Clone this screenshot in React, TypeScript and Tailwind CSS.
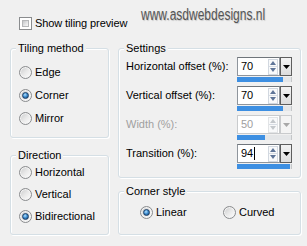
import React from "react";

function Radio({ checked }: { checked?: boolean }) {
  return (
    <span className="w-[13px] h-[13px] shrink-0 rounded-full border border-[#8a8c8e] bg-[linear-gradient(135deg,#c9cacb_0%,#e9e9e9_50%,#ffffff_100%)] flex items-center justify-center shadow-[inset_0_0_0_1px_#f4f4f4]">
      {checked && (
        <span className="w-[7px] h-[7px] rounded-full border border-[#1c3f66] bg-[radial-gradient(circle_at_40%_35%,#b5e2ff_0%,#3f8fd2_45%,#0f3c6e_100%)]" />
      )}
    </span>
  );
}

function Checkbox() {
  return (
    <span className="w-[13px] h-[13px] shrink-0 border border-[#8a8c8e] bg-white p-[2px] flex">
      <span className="flex-1 bg-[linear-gradient(135deg,#c4c6c8_0%,#e6e7e8_60%,#f7f7f7_100%)] border border-[#b5b7b9]" />
    </span>
  );
}

function RadioRow({ label, checked, h }: { label: string; checked?: boolean; h: string }) {
  return (
    <div className={`flex items-center gap-[3px] ${h}`}>
      <Radio checked={checked} />
      <span className="whitespace-nowrap">{label}</span>
    </div>
  );
}

function Spin({
  value,
  fill,
  disabled,
  caret,
}: {
  value: string;
  fill: number;
  disabled?: boolean;
  caret?: boolean;
}) {
  const arrow = disabled ? "#c4c8cc" : "#5f7598";
  return (
    <div className="flex flex-col w-[55px]">
      <div className="flex h-[19px]">
        <div
          className={`flex-1 flex items-center bg-white border ${
            disabled ? "border-[#c9cbcd] text-[#a0a0a0]" : "border-[#8f959c] border-t-[#6f757b]"
          } pl-[3px] pr-[1px]`}
        >
          <span className="flex-1 flex items-center leading-[13px]">
            {value}
            {caret && <span className="w-[1px] h-[13px] bg-black ml-[1px]" />}
          </span>
          <div className={`w-[10px] h-[16px] flex flex-col border ${disabled ? "border-[#e2e4e6]" : "border-[#d2d8e0]"} bg-[#f8f9fa]`}>
            <div className="flex-1 flex items-center justify-center border-b border-[#d8dde4]">
              <svg width="6" height="4" viewBox="0 0 6 4">
                <path d="M0 4 L3 0 L6 4 Z" fill={arrow} />
              </svg>
            </div>
            <div className="flex-1 flex items-center justify-center">
              <svg width="6" height="4" viewBox="0 0 6 4">
                <path d="M0 0 L6 0 L3 4 Z" fill={arrow} />
              </svg>
            </div>
          </div>
        </div>
        <div
          className={`w-[12px] flex items-center justify-center border ${
            disabled ? "border-[#c9cbcd] bg-[#f4f4f4]" : "border-[#5e5e5e] bg-[linear-gradient(180deg,#f4f4f4,#dcdcdc)]"
          }`}
        >
          <svg width="7" height="4" viewBox="0 0 7 4">
            <path d="M0 0 L7 0 L3.5 4 Z" fill={disabled ? "#a8a8a8" : "#000"} />
          </svg>
        </div>
      </div>
      <div className="h-[5px] mt-[1px] bg-[#e4e6e8] border-r border-[#c4c6c8] flex">
        <div className="h-full bg-[#3d8fe2]" style={{ width: fill }} />
      </div>
    </div>
  );
}

function SettingRow({
  label,
  value,
  fill,
  disabled,
  caret,
}: {
  label: string;
  value: string;
  fill: number;
  disabled?: boolean;
  caret?: boolean;
}) {
  return (
    <div className="flex h-[29px]">
      <span className={`w-[111px] h-[19px] leading-[19px] whitespace-nowrap ${disabled ? "text-[#a0a0a0]" : ""}`}>{label}</span>
      <Spin value={value} fill={fill} disabled={disabled} caret={caret} />
    </div>
  );
}

const box =
  "flex flex-col border border-[#d5dfe5] rounded-[3px] shadow-[inset_1px_1px_0_#ffffff,1px_1px_0_#ffffff]";

function Legend({ children }: { children: React.ReactNode }) {
  return (
    <span className="-mt-[7px] ml-[5px] px-[2px] w-fit h-[13px] leading-[13px] bg-[#f0f0f0] whitespace-nowrap">
      {children}
    </span>
  );
}

export default function App() {
  return (
    <div className="w-[307px] h-[246px] bg-[#f0f0f0] text-[11px] text-black font-['Liberation_Sans',sans-serif] overflow-hidden">
      <div className="flex h-[48px]">
        <div className="w-[141px] shrink-0 pl-[19px] pt-[16px]">
          <div className="flex items-center gap-[3px] h-[15px]">
            <Checkbox />
            <span className="whitespace-nowrap tracking-[-0.1px]">Show tiling preview</span>
          </div>
        </div>
        <div className="pt-[5px] h-[20px]">
          <span className="inline-block origin-left scale-x-[0.75] text-[16px] leading-[20px] text-[#555555] [text-shadow:1px_1px_1px_#c8c8c8] whitespace-nowrap">
            www.asdwebdesigns.nl
          </span>
        </div>
      </div>
      <div className="flex gap-[9px] pl-[10px]">
        <div className="w-[99px] flex flex-col gap-[17px]">
          <div className={`${box} h-[90px]`}>
            <Legend>Tiling method</Legend>
            <div className="flex flex-col pl-[8px] mt-[6px]">
              <RadioRow label="Edge" h="h-[23px]" />
              <RadioRow label="Corner" checked h="h-[23px]" />
              <RadioRow label="Mirror" h="h-[23px]" />
            </div>
          </div>
          <div className={`${box} h-[80px]`}>
            <Legend>Direction</Legend>
            <div className="flex flex-col pl-[8px] -mt-[1px]">
              <RadioRow label="Horizontal" h="h-[22px]" />
              <RadioRow label="Vertical" h="h-[22px]" />
              <RadioRow label="Bidirectional" checked h="h-[22px]" />
            </div>
          </div>
        </div>
        <div className="w-[183px] flex flex-col gap-[13px]">
          <div className={`${box} h-[130px]`}>
            <Legend>Settings</Legend>
            <div className="flex flex-col pl-[7px] mt-[2px]">
              <SettingRow label="Horizontal offset (%):" value="70" fill={46} />
              <SettingRow label="Vertical offset (%):" value="70" fill={46} />
              <SettingRow label="Width (%):" value="50" fill={28} disabled />
              <SettingRow label="Transition (%):" value="94" fill={53} caret />
            </div>
          </div>
          <div className={`${box} h-[44px]`}>
            <Legend>Corner style</Legend>
            <div className="flex items-center h-[22px] pl-[21px] mt-[3px]">
              <div className="w-[83px] flex items-center gap-[3px]">
                <Radio checked />
                <span>Linear</span>
              </div>
              <div className="flex items-center gap-[3px]">
                <Radio />
                <span>Curved</span>
              </div>
            </div>
          </div>
        </div>
      </div>
    </div>
  );
}
